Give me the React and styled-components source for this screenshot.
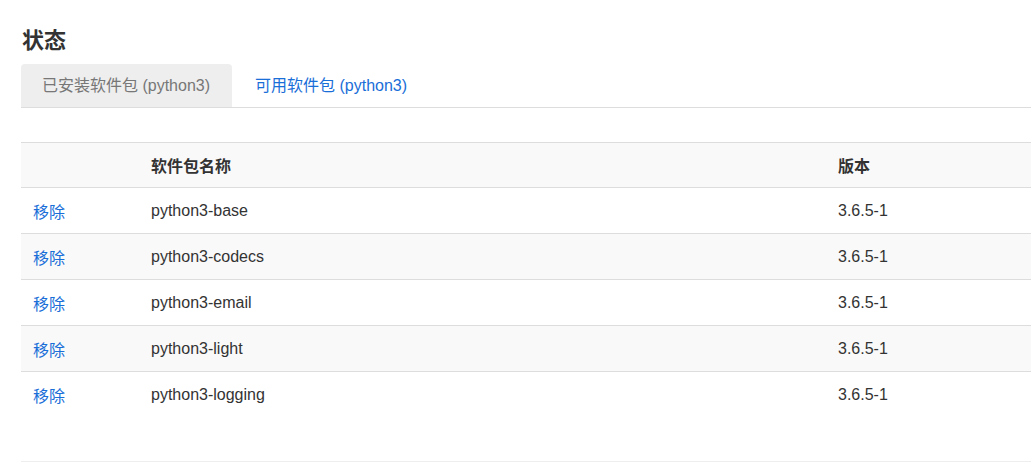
import React from "react";
import styled, { createGlobalStyle } from "styled-components";

const Global = createGlobalStyle`
  html, body { margin: 0; padding: 0; background: #fff; }
  body { font-family: "Liberation Sans", Arial, "Noto Sans CJK SC", sans-serif; color: #333; font-size: 16px; }
`;

const Page = styled.div`
  padding: 27px 0 0 21px;
  width: 1010px;
`;

const Title = styled.h2`
  margin: 0 0 10px 1px;
  font-size: 22px;
  line-height: 27px;
  font-weight: bold;
  color: #333;
`;

const Tabs = styled.div`
  display: flex;
  border-bottom: 1px solid #ddd;
  height: 43px;
`;

const Tab = styled.a`
  display: block;
  padding: 0 22px 0 21px;
  margin-right: 2px;
  line-height: 43px;
  border-radius: 4px 4px 0 0;
  background: ${(p) => (p.$active ? "#eee" : "transparent")};
  color: ${(p) => (p.$active ? "#777" : "#1a6ed8")};
  text-decoration: none;
  cursor: pointer;
`;

const Table = styled.table`
  margin-top: 34px;
  width: 100%;
  border-collapse: collapse;
  table-layout: fixed;
  border-top: 1px solid #ddd;
`;

const Th = styled.th`
  text-align: left;
  font-weight: bold;
  padding: 0 12px;
  height: 44px;
  background: #f9f9f9;
  border-bottom: 1px solid #ddd;
  width: ${(p) => p.$w || "auto"};
`;

const Row = styled.tr`
  background: ${(p) => (p.$striped ? "#f9f9f9" : "#fff")};
`;

const Td = styled.td`
  padding: 0 12px;
  height: 45px;
  border-top: 1px solid #ddd;
`;

const LinkCell = styled.a`
  color: #1a6ed8;
  text-decoration: none;
  cursor: pointer;
`;

const Rule = styled.hr`
  margin: 44px 0 0;
  border: 0;
  border-top: 1px solid #eee;
`;

const packages = [
  ["python3-base", "3.6.5-1"],
  ["python3-codecs", "3.6.5-1"],
  ["python3-email", "3.6.5-1"],
  ["python3-light", "3.6.5-1"],
  ["python3-logging", "3.6.5-1"],
];

export default function App() {
  return (
    <>
      <Global />
      <Page>
        <Title>状态</Title>
        <Tabs>
          <Tab $active>已安装软件包 (python3)</Tab>
          <Tab>可用软件包 (python3)</Tab>
        </Tabs>
        <Table>
          <thead>
            <tr>
              <Th $w="94px"></Th>
              <Th $w="663px">软件包名称</Th>
              <Th>版本</Th>
            </tr>
          </thead>
          <tbody>
            {packages.map(([name, ver], i) => (
              <Row key={name} $striped={i % 2 === 1}>
                <Td>
                  <LinkCell>移除</LinkCell>
                </Td>
                <Td>{name}</Td>
                <Td>{ver}</Td>
              </Row>
            ))}
          </tbody>
        </Table>
        <Rule />
      </Page>
    </>
  );
}
